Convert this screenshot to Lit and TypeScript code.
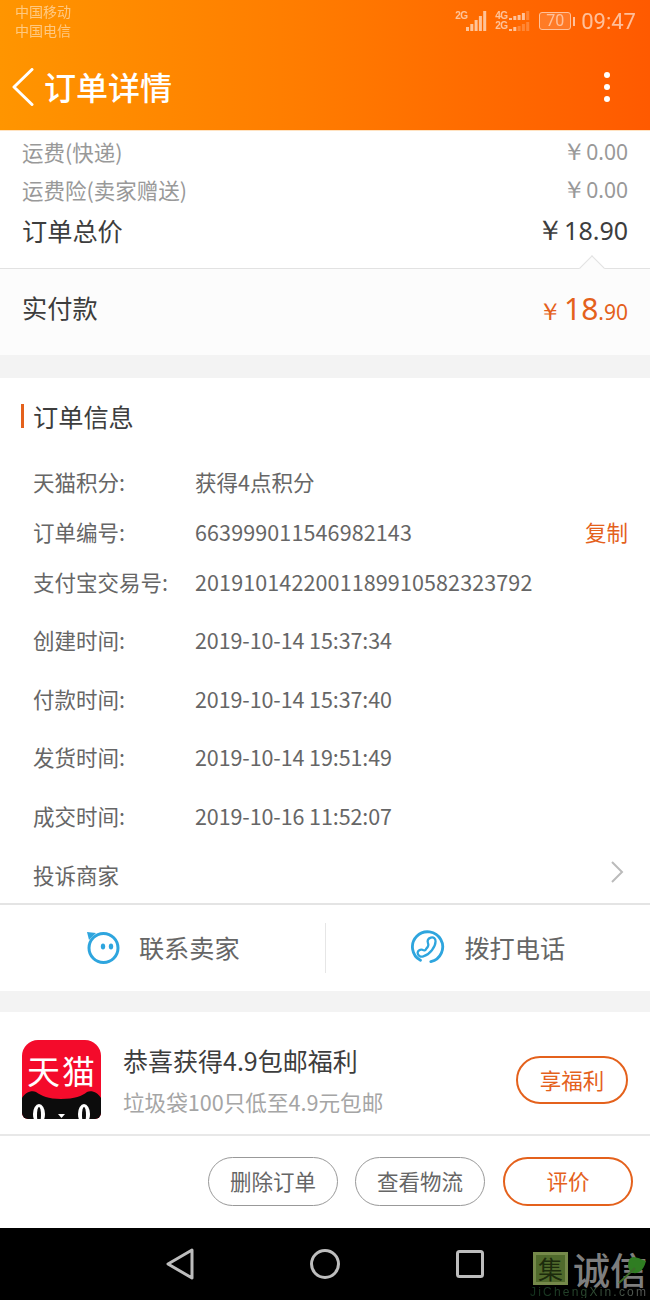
import { css, html, LitElement, svg } from "lit";
import { customElement } from "lit/decorators.js";

const infoRows = [
  { label: "天猫积分:", value: "获得4点积分" },
  { label: "订单编号:", value: "663999011546982143", kind: "long", copy: true },
  { label: "支付宝交易号:", value: "2019101422001189910582323792", kind: "long spaced" },
  { label: "创建时间:", value: "2019-10-14 15:37:34", kind: "date spaced" },
  { label: "付款时间:", value: "2019-10-14 15:37:40", kind: "date spaced" },
  { label: "发货时间:", value: "2019-10-14 19:51:49", kind: "date spaced" },
  { label: "成交时间:", value: "2019-10-16 11:52:07", kind: "date" },
];

// one column of signal bars, the ones past `lit` are dimmed
const signal = (bars: number[], lit: number, base: number) =>
  bars.map(
    (h, i) =>
      svg`<rect x=${i * 4.3} y=${base - h} width="3" height=${h} fill="#fff" opacity=${i < lit ? 1 : 0.35}></rect>`
  );

@customElement("app-root")
export class AppRoot extends LitElement {
  static styles = css`
    :host {
      display: block;
      width: 650px;
      height: 1300px;
      overflow: hidden;
      background: #f3f3f3;
      font-family: "Noto Sans CJK SC", "Noto Sans", sans-serif;
      color: #666;
    }
    .header {
      height: 130px;
      background: linear-gradient(90deg, #ff9500 0%, #ff7d00 45%, #ff5a00 100%);
      color: #fff;
      display: flex;
      flex-direction: column;
    }
    .status {
      height: 44px;
      box-sizing: border-box;
      display: flex;
      justify-content: space-between;
      padding: 3px 14px 0 15px;
    }
    .carriers {
      font-size: 14px;
      line-height: 19px;
      opacity: 0.5;
      margin-top: -1px;
    }
    .indicators {
      display: flex;
      align-items: center;
      height: 36px;
      opacity: 0.6;
    }
    .clock {
      font-size: 22px;
      font-family: Roboto, sans-serif;
      margin-left: 6px;
    }
    .net {
      display: flex;
      flex-direction: column;
      width: 11px;
      font: 700 10px/10px "Liberation Sans", sans-serif;
      letter-spacing: -0.6px;
    }
    .battery {
      display: flex;
      align-items: center;
      gap: 2px;
      margin-left: 9px;
    }
    .battery-body {
      width: 32px;
      height: 18px;
      box-sizing: border-box;
      border: 1px solid #fff;
      border-radius: 3px;
      background: rgba(255, 255, 255, 0.25);
      font: 16px/16px Roboto, sans-serif;
      text-align: center;
    }
    .battery-tip {
      width: 2px;
      height: 9px;
      background: #fff;
    }
    .nav {
      flex: 1;
      display: flex;
      align-items: center;
      padding: 0 40px 0 12px;
    }
    .nav h1 {
      flex: 1;
      margin: 0 0 2px 10px;
      font-size: 32px;
      font-weight: 500;
      line-height: 40px;
    }
    .dots {
      display: flex;
      flex-direction: column;
      gap: 6px;
    }
    .dots i {
      width: 6px;
      height: 6px;
      border-radius: 50%;
      background: #fff;
    }
    .summary {
      height: 139px;
      box-sizing: border-box;
      padding: 1px 22px 0;
      background: #fff;
      border-top: 1px solid #ffe3c2;
      border-bottom: 1px solid #e2e2e2;
      position: relative;
    }
    .fee {
      display: flex;
      justify-content: space-between;
      align-items: center;
      height: 38px;
      font-size: 21.5px;
      color: #999;
    }
    .fee .money {
      font-size: 21px;
      margin-top: 1px;
    }
    .money {
      font-family: "Noto Sans", sans-serif;
    }
    .yen {
      font-size: 1.12em;
      line-height: 1;
    }
    .total {
      display: flex;
      justify-content: space-between;
      align-items: center;
      height: 44px;
      font-size: 25.2px;
      color: #3d3d3d;
    }
    .total .money {
      font-size: 25px;
    }
    .notch {
      position: absolute;
      right: 49px;
      bottom: -9px;
      width: 17px;
      height: 17px;
      background: #fcfcfc;
      border-left: 1px solid #e2e2e2;
      border-top: 1px solid #e2e2e2;
      transform: rotate(45deg);
    }
    .paid {
      height: 86px;
      box-sizing: border-box;
      padding: 0 22px 10px;
      background: #fcfcfc;
      display: flex;
      justify-content: space-between;
      align-items: center;
      font-size: 25.2px;
      color: #3d3d3d;
    }
    .paid-amount {
      color: #e4611c;
      display: flex;
      align-items: baseline;
      font-family: "Noto Sans", sans-serif;
      font-size: 21px;
      margin-top: 2px;
    }
    .paid-amount b {
      font-weight: 400;
      font-size: 30px;
      margin-left: 2px;
    }
    .info {
      margin-top: 23px;
      background: #fff;
      border-bottom: 2px solid #e4e4e4;
      height: 527px;
      box-sizing: border-box;
    }
    .title {
      height: 78px;
      box-sizing: border-box;
      display: flex;
      align-items: center;
      padding: 0 0 2px 21px;
      gap: 9px;
      font-size: 25.2px;
      color: #3d3d3d;
    }
    .title::before {
      content: "";
      width: 3px;
      height: 24px;
      background: #e4611c;
    }
    .row {
      display: flex;
      align-items: center;
      height: 50px;
      padding: 0 22px 0 33px;
      font-size: 21.5px;
      color: #666;
    }
    .row.spaced {
      margin-bottom: 8.5px;
    }
    .row .label {
      width: 162px;
      flex: none;
    }
    .row .value {
      flex: 1;
    }
    .row.long .value {
      letter-spacing: 0.12px;
    }
    .row.date .value {
      letter-spacing: -0.1px;
    }
    .row .copy {
      color: #e4611c;
    }
    .complain {
      height: 63px;
      box-sizing: border-box;
      justify-content: space-between;
      padding-top: 5px;
      padding-right: 26px;
    }
    .complain svg {
      margin-bottom: 4px;
    }
    .contact {
      height: 86px;
      background: #fff;
      display: flex;
      align-items: center;
    }
    .contact div {
      flex: 1;
      height: 50px;
      display: flex;
      align-items: center;
      justify-content: center;
      gap: 19px;
      font-size: 25.2px;
      color: #666;
      padding-left: 1px;
    }
    .contact div > * {
      margin-bottom: 2px;
    }
    .contact div + div {
      border-left: 1px solid #e6e6e6;
    }
    .promo {
      margin-top: 21px;
      height: 124px;
      box-sizing: border-box;
      background: #fff;
      border-bottom: 2px solid #e8e8e8;
      display: flex;
      align-items: flex-start;
      padding: 28px 22px 0;
    }
    .tmall {
      position: relative;
      width: 79px;
      height: 79px;
      flex: none;
      border-radius: 16px 16px 6px 6px;
      overflow: hidden;
    }
    .tmall svg {
      display: block;
    }
    .tmall span {
      position: absolute;
      left: 5px;
      top: 11px;
      font-size: 33px;
      line-height: 38px;
      color: #fff;
      white-space: nowrap;
      letter-spacing: 2px;
    }
    .promo-text {
      flex: 1;
      margin-left: 22px;
    }
    .promo-title {
      font-size: 25px;
      line-height: 40px;
      color: #3d3d3d;
    }
    .promo-sub {
      font-size: 21.6px;
      line-height: 44px;
      color: #a5a5a5;
    }
    .btn {
      box-sizing: border-box;
      height: 49px;
      width: 130px;
      border-radius: 25px;
      border: 1px solid #999;
      background: #fff;
      color: #666;
      font-family: inherit;
      font-size: 21.5px;
      padding: 0 0 3px;
    }
    .btn.hot {
      border: 2px solid #e4611c;
      color: #e4611c;
    }
    .footer .btn.hot {
      margin-left: 1px;
    }
    .promo .btn {
      width: 112px;
      height: 48px;
      margin-top: 16px;
      padding-bottom: 2px;
    }
    .footer {
      height: 92px;
      box-sizing: border-box;
      background: #fff;
      display: flex;
      justify-content: flex-end;
      align-items: center;
      gap: 17px;
      padding: 0 17px 1px 0;
    }
    .softkeys {
      height: 72px;
      background: #000;
      position: relative;
      display: flex;
      align-items: center;
      padding-left: 166px;
      gap: 116px;
    }
    .softkeys > svg {
      display: block;
    }
    .mark {
      position: absolute;
      right: 0;
      top: 0;
      width: 118px;
      height: 72px;
    }
    .mark-box {
      position: absolute;
      left: 1px;
      top: 24px;
      width: 35px;
      height: 33px;
      box-sizing: border-box;
      border: 3px solid #75894a;
      background: #506a2c;
      color: #1c2a0c;
      font-size: 25px;
      line-height: 26px;
      text-align: center;
    }
    .mark-name {
      position: absolute;
      left: 41px;
      top: 23px;
      font-size: 37px;
      font-weight: 500;
      line-height: 36px;
      color: #7e7e7e;
      white-space: nowrap;
    }
    .mark-url {
      position: absolute;
      left: -2px;
      top: 59px;
      font: 12px/11px "Liberation Sans", sans-serif;
      letter-spacing: 2.2px;
      white-space: nowrap;
      background: linear-gradient(90deg, #12301c, #2c4a30 50%, #5a5a5a);
      -webkit-background-clip: text;
      background-clip: text;
      color: transparent;
    }
    .mark-leaf {
      position: absolute;
      left: 86px;
      top: 27px;
    }
  `;

  render() {
    return html`
      <div class="header">
        <div class="status">
          <div class="carriers">中国移动<br />中国电信</div>
          <div class="indicators">
            <div class="net">2G<br />&nbsp;</div>
            <svg width="21" height="20">${signal([4, 7, 11, 15, 20], 5, 20)}</svg>
            <div class="net" style="margin-left:8px">4G<br />2G</div>
            <svg width="21" height="20" style="margin-left:3px">
              ${signal([2, 4, 5, 7, 9], 4, 9)}${signal([2, 4, 5, 7, 9], 2, 20)}
            </svg>
            <div class="battery">
              <div class="battery-body">70</div>
              <div class="battery-tip"></div>
            </div>
            <div class="clock">09:47</div>
          </div>
        </div>
        <div class="nav">
          <svg width="22" height="38" viewBox="0 0 22 38">
            <path d="M20 1.500 L2 19 L20 36.500" fill="none" stroke="#fff" stroke-width="3" stroke-linecap="round" stroke-linejoin="round"></path>
          </svg>
          <h1>订单详情</h1>
          <div class="dots"><i></i><i></i><i></i></div>
        </div>
      </div>

      <div class="summary">
        <div class="fee"><span>运费(快递)</span><span class="money"><span class="yen">￥</span>0.00</span></div>
        <div class="fee"><span>运费险(卖家赠送)</span><span class="money"><span class="yen">￥</span>0.00</span></div>
        <div class="total"><span>订单总价</span><span class="money"><span class="yen">￥</span>18.90</span></div>
        <div class="notch"></div>
      </div>
      <div class="paid">
        <span>实付款</span>
        <span class="paid-amount"><span class="yen">￥</span><b>18</b>.90</span>
      </div>

      <div class="info">
        <div class="title">订单信息</div>
        ${infoRows.map(
          (r) => html`
            <div class="row ${r.kind ?? ""}">
              <span class="label">${r.label}</span>
              <span class="value">${r.value}</span>
              ${r.copy ? html`<span class="copy">复制</span>` : ""}
            </div>
          `
        )}
        <div class="row complain">
          <span>投诉商家</span>
          <svg width="14" height="24" viewBox="0 0 14 24">
            <path d="M2 2 L12 12 L2 22" fill="none" stroke="#bbb" stroke-width="2"></path>
          </svg>
        </div>
      </div>

      <div class="contact">
        <div>
          <svg width="34" height="34" viewBox="0 0 34 34">
            <circle cx="17.500" cy="18" r="14.500" fill="none" stroke="#2ea5de" stroke-width="3"></circle>
            <path d="M1 2 L10 3 L3 10 Z" fill="#2ea5de"></path>
            <ellipse cx="17" cy="16.500" rx="2.200" ry="3" fill="#2ea5de"></ellipse>
            <ellipse cx="25" cy="16.500" rx="2.200" ry="3" fill="#2ea5de"></ellipse>
          </svg>
          <span>联系卖家</span>
        </div>
        <div>
          <svg width="34" height="34" viewBox="0 0 36 36">
            <path d="M10 32 A16 16 0 1 1 21 33.500" fill="none" stroke="#2ea5de" stroke-width="3" stroke-linecap="round"></path>
            <path d="M21 8 C24 7 26 9 26 12 C26 18 20 26 13 28 C10 29 7 27 7 24 C7 22 10 20 12 21 C14 22 15 22 16 20 C18 18 19 16 18 14 C17 11 18 9 21 8 Z" fill="none" stroke="#2ea5de" stroke-width="2.400"></path>
          </svg>
          <span>拨打电话</span>
        </div>
      </div>

      <div class="promo">
        <div class="tmall">
          <svg width="79" height="79" viewBox="0 0 79 79">
            <rect width="79" height="79" fill="#f40b2b"></rect>
            <path d="M0 58 C3 53 9 50 14 52 C20 56 26 59 39 59 C53 59 60 56 65 52 C70 50 76 53 79 58 L79 79 L0 79 Z" fill="#0c0c0c"></path>
            <ellipse cx="17" cy="74" rx="6" ry="10" fill="#fff"></ellipse>
            <ellipse cx="62" cy="74" rx="6" ry="10" fill="#fff"></ellipse>
            <ellipse cx="17" cy="75" rx="2" ry="8" fill="#0c0c0c"></ellipse>
            <ellipse cx="62" cy="75" rx="2" ry="8" fill="#0c0c0c"></ellipse>
            <path d="M36 74 L43 74 L39.500 78 Z" fill="#fff"></path>
          </svg>
          <span>天猫</span>
        </div>
        <div class="promo-text">
          <div class="promo-title">恭喜获得4.9包邮福利</div>
          <div class="promo-sub">垃圾袋100只低至4.9元包邮</div>
        </div>
        <button class="btn hot">享福利</button>
      </div>

      <div class="footer">
        <button class="btn">删除订单</button>
        <button class="btn">查看物流</button>
        <button class="btn hot">评价</button>
      </div>

      <div class="softkeys">
        <svg width="28" height="32" viewBox="0 0 28 32">
          <path d="M26 2 L2 16 L26 30 Z" fill="none" stroke="#bdbdbd" stroke-width="3" stroke-linejoin="round"></path>
        </svg>
        <svg width="30" height="30" viewBox="0 0 30 30">
          <circle cx="15" cy="15" r="13.500" fill="none" stroke="#bdbdbd" stroke-width="3"></circle>
        </svg>
        <svg width="28" height="28" viewBox="0 0 28 28">
          <rect x="1.500" y="1.500" width="25" height="25" rx="2" fill="none" stroke="#bdbdbd" stroke-width="3"></rect>
        </svg>
        <div class="mark">
          <div class="mark-box">集</div>
          <div class="mark-name">诚信</div>
          <div class="mark-url">JiChengXin.com</div>
          <svg class="mark-leaf" width="32" height="30" viewBox="0 0 32 30">
            <path d="M11 5 C14 -1 20 3 28 6 C26 14 22 19 15 18 C10 16 9 10 11 5 Z" fill="#2f7d22"></path>
            <path d="M17 13 L1 28" stroke="#3d6a2a" stroke-width="2"></path>
          </svg>
        </div>
      </div>
    `;
  }
}
